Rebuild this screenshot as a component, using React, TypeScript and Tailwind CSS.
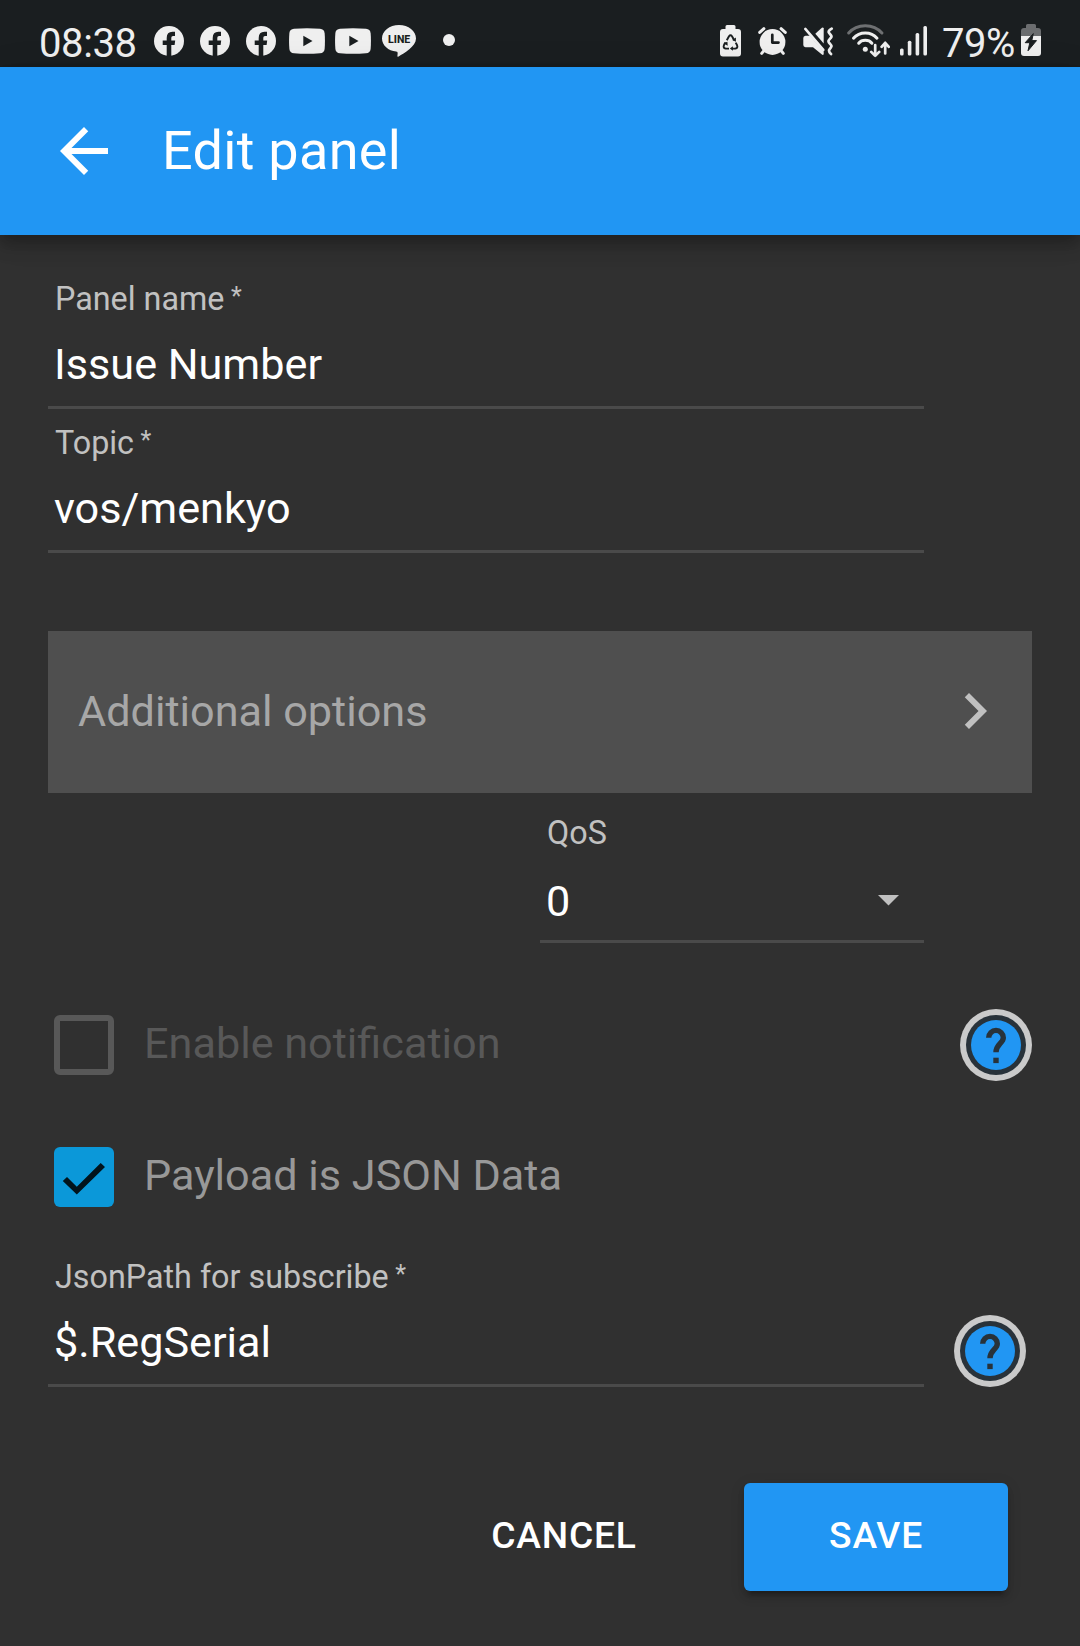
import type { ReactNode } from "react";

const INK = "#1a1e20";
const LIGHT = "#efefef";

function FacebookIcon() {
  return (
    <svg width="30" height="30" viewBox="0 0 30 30">
      <circle cx="15" cy="15" r="15" fill={LIGHT} />
      <path d="M12.7 30V19H8.7v-4.5h4V12q0-6.2 5.8-6.2H21V10h-2q-1.7 0-1.7 1.8v2.7h3.9L20.6 19h-3.3v11z" fill={INK} />
    </svg>
  );
}

function YoutubeIcon() {
  return (
    <svg width="36" height="26" viewBox="0 0 36 26">
      <path d="M5 .7Q18-.4 31 .7q4.200.4 4.600 4.300.7 8 0 16-.4 3.900-4.600 4.300-13 1.100-26 0Q.8 24.900.4 21-.3 13 .4 5 .8 1.100 5 .7z" fill={LIGHT} />
      <path d="M14.300 7.700v10.500l9.200-5.200z" fill={INK} />
    </svg>
  );
}

function LineIcon() {
  return (
    <svg width="34" height="32" viewBox="0 0 34 32">
      <path d="M17 0C7.500 0 0 6 0 13.500 0 20.500 6.300 25.700 14.200 26.600c1.600.3 1.700 1.100 1.200 4.400-.1.800.4.900 1.200.4C22 28.200 34 21.500 34 13.500 34 6 26.500 0 17 0z" fill={LIGHT} />
      <text x="6.100" y="18.200" textLength="22.200" lengthAdjust="spacingAndGlyphs" fontSize="11.500" fontWeight="800" fill={INK} fontFamily="Roboto, sans-serif">
        LINE
      </text>
    </svg>
  );
}

function RecycleBatteryIcon() {
  return (
    <svg width="21" height="32" viewBox="0 0 21 32">
      <path d="M7 0h7q1.500 0 1.500 1.500V4H18q3 0 3 3v21.500q0 3-3 3H3q-3 0-3-3V7q0-3 3-3h2.500V1.500Q5.500 0 7 0z" fill={LIGHT} />
      <g fill="none" stroke={INK} strokeWidth="1.900" strokeLinejoin="round">
        <path d="M6.800 15.200l2.200-3.900q1.500-2 3 0l2.200 3.900" />
        <path d="M15.700 17.600l1.400 2.700q1 2.700-1.700 3.300h-3.600" />
        <path d="M9 23.600H5.600q-2.700-.6-1.700-3.300l1.500-2.900" />
      </g>
      <path d="M15.900 12.500v4.200l-3.700-1.800zM12.900 21.200v4.600l-3-2.300zM3.500 18.300l3.900-1.600.3 4z" fill={INK} />
    </svg>
  );
}

function AlarmIcon() {
  return (
    <svg width="29" height="28" viewBox="0 0 29 28">
      <circle cx="14.500" cy="15" r="12.900" fill={LIGHT} />
      <g fill="none" stroke={LIGHT} strokeWidth="3" strokeLinecap="round">
        <path d="M1.700 5.400l4.200-3.700M27.300 5.400l-4.200-3.700M6.500 23l-2.800 3.400M22.500 23l2.800 3.400" />
      </g>
      <path d="M14.300 7.800v7.800h6.200" fill="none" stroke={INK} strokeWidth="2.700" strokeLinecap="round" strokeLinejoin="round" />
    </svg>
  );
}

function MuteVibrateIcon() {
  return (
    <svg width="31" height="29" viewBox="0 0 31 29">
      <path d="M2.500 8.800H7l13.700 15.700v2.800q-.6 1-1.800.3L10 20.300H2.500Q.3 20 .3 18v-7q0-2 2.200-2.200z" fill={LIGHT} />
      <path d="M12.300 6.800L18.900.8q1.300-.8 1.800.4v15.200z" fill={LIGHT} />
      <path d="M2.300 1.900l18 21" stroke={LIGHT} strokeWidth="2.600" strokeLinecap="round" />
      <path d="M28.700 1.600q-4 2.400-2.700 4.200l2 2.600q1 1.300-.3 2.600l-1.700 2q-1 1.300 0 2.600l1.700 2q1.300 1.300.3 2.600l-1.700 2.400q-1 2 1.700 4.400" fill="none" stroke={LIGHT} strokeWidth="2.700" strokeLinecap="round" />
    </svg>
  );
}

function WifiIcon() {
  return (
    <svg width="43" height="34" viewBox="0 0 43 34">
      <g fill="none" strokeWidth="3" strokeLinecap="round">
        <path d="M1.700 9Q8 1.700 18.300 1.700T34.900 9" stroke="#6e7072" />
        <path d="M6.500 14.200Q11 8.900 18.300 8.900T30 14.200" stroke={LIGHT} />
        <path d="M11.700 19.200Q14 16.300 18.300 16.300T24.900 19.200" stroke={LIGHT} />
      </g>
      <circle cx="18.300" cy="25.300" r="2.500" fill={LIGHT} />
      <g fill="none" stroke={LIGHT} strokeWidth="2.700" strokeLinecap="round" strokeLinejoin="round">
        <path d="M28.200 21.200v10.500M24.200 27.900l4 4 4-4M38.200 29.500V19M34.600 22.800l3.600-4 3.600 4" />
      </g>
    </svg>
  );
}

function SignalIcon() {
  return (
    <svg width="28" height="30" viewBox="0 0 28 30" fill={LIGHT}>
      <rect x="0" y="22.500" width="3.600" height="7" rx="1.500" />
      <rect x="7.800" y="14.700" width="3.600" height="14.800" rx="1.500" />
      <rect x="15.600" y="7" width="3.600" height="22.500" rx="1.500" />
      <rect x="23.400" y="0" width="3.600" height="29.500" rx="1.500" />
    </svg>
  );
}

function ChargingBatteryIcon() {
  return (
    <svg width="20" height="32" viewBox="0 0 20 32">
      <path d="M6.500 0h7Q15 0 15 1.500V4h2q3 0 3 3v5H0V7q0-3 3-3h2V1.500Q5 0 6.500 0z" fill="#6b6d6f" />
      <path d="M0 12h20v17q0 3-3 3H3q-3 0-3-3z" fill={LIGHT} />
      <path d="M12.300 9.600L4.200 18.700h4.600L7 26.800l8.500-10.200h-4.700z" fill={INK} stroke={INK} strokeWidth="1" strokeLinejoin="round" />
    </svg>
  );
}

function StatusBar() {
  return (
    <div className="flex h-[67px] shrink-0 items-center bg-[#1a1e20] pt-[15px] pr-[39px] pl-[39px] text-[#efefef]">
      <span className="mt-[5px] w-[115px] text-[40px] leading-[46px] tracking-[-0.4px]">08:38</span>
      <div className="flex items-center gap-4">
        <FacebookIcon />
        <FacebookIcon />
        <FacebookIcon />
      </div>
      <div className="ml-[13px] flex items-center gap-2.5">
        <YoutubeIcon />
        <YoutubeIcon />
      </div>
      <div className="ml-[11px]">
        <LineIcon />
      </div>
      <div className="mb-0.5 ml-[27px] size-3 rounded-full bg-[#efefef]" />
      <div className="ml-auto flex items-center">
        <RecycleBatteryIcon />
        <div className="ml-[17px]"><AlarmIcon /></div>
        <div className="ml-4"><MuteVibrateIcon /></div>
        <div className="ml-[13px]"><WifiIcon /></div>
        <div className="ml-2.5"><SignalIcon /></div>
        <span className="mt-[5px] ml-[14px] w-[79px] text-[40px] leading-[46px] tracking-[-0.5px]">79%</span>
        <div className="mb-0.5"><ChargingBatteryIcon /></div>
      </div>
    </div>
  );
}

function AppBar() {
  return (
    <header className="relative flex h-[168px] shrink-0 items-center bg-[#2196f3] pl-12 text-white shadow-[0_6px_12px_-3px_rgba(0,0,0,0.2),0_12px_15px_0_rgba(0,0,0,0.14),0_3px_30px_0_rgba(0,0,0,0.12)]">
      <svg width="72" height="72" viewBox="0 0 24 24" fill="currentColor">
        <path d="M20 11H7.830l5.590-5.590L12 4l-8 8 8 8 1.410-1.410L7.830 13H20v-2z" />
      </svg>
      <h1 className="ml-[42px] text-[54px] leading-[64px] tracking-[0.3px]">Edit panel</h1>
    </header>
  );
}

function Field({ label, value }: { label: string; value: string }) {
  return (
    <div className="h-36 w-[876px] border-b-3 border-[#4a4a4a] pt-3.5 pl-[6px]">
      <div className="flex pl-px text-[32.3px] leading-10 text-[#c1c1c1]">
        {label}
        <span className="-mt-[2px] ml-[6.5px] text-[25px]">*</span>
      </div>
      <div className="mt-[21px] text-[43.2px] leading-[50px] text-white">{value}</div>
    </div>
  );
}

function HelpButton() {
  return (
    <button className="size-[72px] shrink-0" aria-label="Help">
      <svg width="72" height="72" viewBox="0 0 72 72">
        <circle cx="36" cy="36" r="36" fill="#cacaca" />
        <circle cx="36" cy="36" r="30" fill="#28323a" />
        <circle cx="36" cy="36" r="25" fill="#2196f3" />
        <path d="M28.700 28.700a7.300 7.300 0 0 1 14.600 0c0 5.500-7.300 6.300-7.300 14.600" fill="none" stroke="#28323a" strokeWidth="5.400" />
        <rect x="33.300" y="48.700" width="5.400" height="5.400" fill="#28323a" />
      </svg>
    </button>
  );
}

function CheckRow({ box, children }: { box: ReactNode; children: ReactNode }) {
  return (
    <div className="flex h-[60px] items-center">
      {box}
      <div className="mb-0.5 ml-[30px] text-[43.2px] leading-[50px]">{children}</div>
    </div>
  );
}

export default function App() {
  return (
    <div className="flex h-[1646px] w-[1080px] flex-col overflow-hidden bg-[#303030] font-['Roboto',sans-serif]">
      <StatusBar />
      <AppBar />
      <main className="flex flex-col px-12 pt-[30px]">
        <Field label="Panel name" value="Issue Number" />
        <Field label="Topic" value="vos/menkyo" />

        <div className="mt-[78px] flex h-[162px] items-center justify-between bg-[#4f4f4f] pr-[21px] pl-[30px]">
          <span className="text-[43.2px] leading-[50px] text-[#a7a7a7]">Additional options</span>
          <svg className="mb-0.5" width="72" height="72" viewBox="0 0 24 24" fill="#c0c0c0">
            <path d="M10 6L8.590 7.410 13.170 12l-4.580 4.590L10 18l6-6z" />
          </svg>
        </div>

        <div className="mt-1.5 ml-[492px] h-36 w-96 border-b-3 border-[#4a4a4a] pt-[14px] pr-[25px] pl-[6px]">
          <div className="pl-px text-[32.3px] leading-10 text-[#c1c1c1]">QoS</div>
          <div className="mt-6 flex items-center justify-between text-[43.2px] leading-[50px] text-white">
            0
            <svg className="mb-1" width="21" height="11" viewBox="0 0 21 11" fill="#c0c0c0">
              <path d="M0 0h21L10.500 10.500z" />
            </svg>
          </div>
        </div>

        <div className="mt-[66px] flex items-center justify-between pl-1.5 text-[#585858]">
          <CheckRow box={<div className="size-[60px] rounded-md border-6 border-[#585858]" />}>Enable notification</CheckRow>
          <HelpButton />
        </div>

        <div className="mt-[66px] pl-1.5 text-[#989898]">
          <CheckRow
            box={
              <div className="size-[60px] rounded-md bg-[#0b98d9]">
                <svg width="60" height="60" viewBox="0 0 60 60" fill="#02141c">
                  <path d="M8.800 34l4.200-4 9.800 9.700L46.700 16l4.300 4-28.200 27.500z" />
                </svg>
              </div>
            }
          >
            Payload is JSON Data
          </CheckRow>
        </div>

        <div className="mt-9 flex items-end justify-between pr-1.5">
          <Field label="JsonPath for subscribe" value="$.RegSerial" />
          <HelpButton />
        </div>

        <div className="mt-24 flex justify-end pr-6 text-[37.2px] font-medium text-white">
          <button className="h-[108px] w-[264px] pb-[3px] tracking-[0.8px]">CANCEL</button>
          <button className="ml-[48px] h-[108px] w-[264px] rounded-md bg-[#2196f3] pb-[3px] tracking-[0.8px] shadow-[0_9px_3px_-6px_rgba(0,0,0,0.2),0_6px_6px_0_rgba(0,0,0,0.14),0_3px_15px_0_rgba(0,0,0,0.12)]">
            SAVE
          </button>
        </div>
      </main>
    </div>
  );
}
